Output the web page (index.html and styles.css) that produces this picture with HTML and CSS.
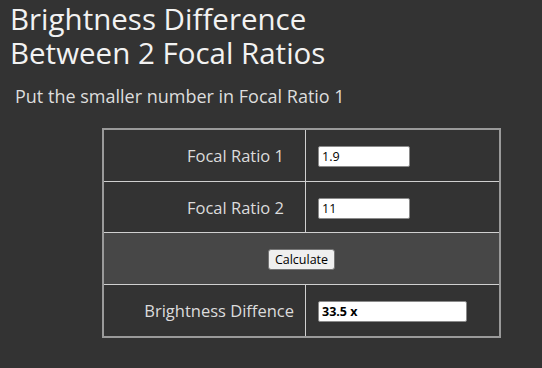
FILE: index.html
```html
<!DOCTYPE html>
<html>
  <head>
    <meta charset="utf-8">
    <title>Brightness Difference</title>
    <link rel="stylesheet" href="styles.css">
  </head>
  <body>
    <h1 class="title">Brightness Difference<br>Between 2 Focal Ratios</h1>
    <p class="hint">Put the smaller number in Focal Ratio 1</p>

    <table class="calc">
      <tr>
        <td class="label">Focal Ratio 1</td>
        <td class="field"><input type="text" class="num" value="1.9"></td>
      </tr>
      <tr class="short">
        <td class="label">Focal Ratio 2</td>
        <td class="field"><input type="text" class="num" value="11"></td>
      </tr>
      <tr class="action">
        <td colspan="2"><button class="btn">Calculate</button></td>
      </tr>
      <tr class="short">
        <td class="label label_result">Brightness Diffence</td>
        <td class="field"><input type="text" class="num num_result" value="33.5 x"></td>
      </tr>
    </table>
  </body>
</html>
```

FILE: styles.css
```css
* {
  margin: 0;
  padding: 0;
  box-sizing: border-box;
}

body {
  background-color: #333333;
  color: #e6e6e6;
  font-family: "Open Sans", "Noto Sans", sans-serif;
  padding-top: 2px;
}

.title {
  font-weight: normal;
  font-size: 29.5px;
  line-height: 34px;
  color: #f2f2f2;
  margin-left: 10px;
}

.hint {
  font-size: 18px;
  line-height: 24px;
  color: #dddddd;
  margin-top: 14px;
  margin-left: 15px;
}

.calc {
  margin-top: 20px;
  margin-left: 102px;
  width: 399px;
  border: 2px solid #9a9a9a;
  border-spacing: 0;
}

.calc td {
  height: 52px;
  vertical-align: middle;
  border-bottom: 1px solid #d0d0d0;
}

.calc .short td {
  height: 51px;
}

.calc tr:last-child td {
  border-bottom: none;
}

.label {
  width: 202px;
  text-align: right;
  padding-right: 21px;
  font-size: 16.5px;
  color: #dcdcdc;
  border-right: 1px solid #d0d0d0;
}

.label_result {
  padding-right: 11px;
}

.field {
  padding-left: 12px;
}

.action td {
  background-color: #474747;
  text-align: center;
}

.num {
  width: 92px;
  height: 21px;
  border: 1px solid #8a8a8a;
  border-radius: 2px;
  background: #fff;
  color: #000;
  font-family: "Open Sans", "Noto Sans", sans-serif;
  font-size: 12.5px;
  padding: 0 3px;
}

.num_result {
  width: 149px;
  font-weight: bold;
}

.btn {
  height: 21px;
  padding: 0 6px;
  border: 1px solid #767676;
  border-radius: 3px;
  background: #efefef;
  color: #000;
  font-family: "Open Sans", "Noto Sans", sans-serif;
  font-size: 12.5px;
}
```
